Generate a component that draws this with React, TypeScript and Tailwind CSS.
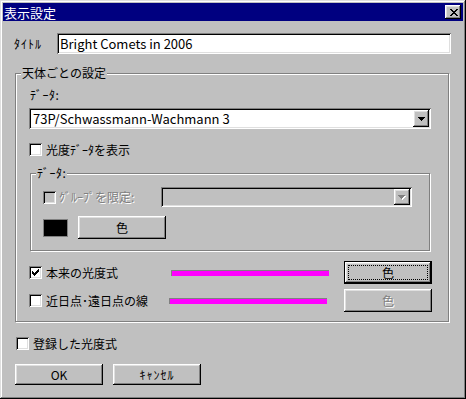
import React from 'react';

// pixel glyphs for the little win9x bitmaps
const CHECK = ['......#', '.....##', '#...###', '##.###.', '#####..', '.###...', '..#....'];
const CLOSE_X = ['##....##', '.##..##.', '..####..', '...##...', '..####..', '.##..##.', '##....##'];
const ARROW = ['#######', '.#####.', '..###..', '...#...'];

function Bitmap({ rows, color = '#000', shadow }: { rows: string[]; color?: string; shadow?: string }) {
  const w = rows[0].length + (shadow ? 1 : 0);
  const h = rows.length + (shadow ? 1 : 0);
  const cells: [number, number][] = [];
  rows.forEach((r, y) => r.split('').forEach((c, x) => c === '#' && cells.push([x, y])));
  return (
    <svg width={w} height={h} viewBox={`0 0 ${w} ${h}`} shapeRendering="crispEdges" className="block">
      {shadow && cells.map(([x, y]) => <rect key={`s${x}-${y}`} x={x + 1} y={y + 1} width={1} height={1} fill={shadow} />)}
      {cells.map(([x, y]) => <rect key={`${x}-${y}`} x={x} y={y} width={1} height={1} fill={color} />)}
    </svg>
  );
}

const raised = 'bg-[#c0c0c0] shadow-[inset_-1px_-1px_#000,inset_1px_1px_#fff,inset_-2px_-2px_#808080,inset_2px_2px_#dfdfdf]';
const sunken = 'shadow-[inset_1px_1px_#808080,inset_-1px_-1px_#fff,inset_2px_2px_#000,inset_-2px_-2px_#dfdfdf]';
const disabledText = 'text-[#808080] [text-shadow:1px_1px_0_#fff]';

function Checkbox({ checked, disabled }: { checked?: boolean; disabled?: boolean }) {
  return (
    <div className={`w-[13px] h-[13px] shrink-0 flex items-start justify-start pl-[3px] pt-[3px] ${disabled ? 'bg-[#c0c0c0]' : 'bg-white'} ${sunken}`}>
      {checked && <Bitmap rows={CHECK} />}
    </div>
  );
}

function Button({ label, width, height, isDefault, disabled, wide }: { label: string; width: number; height: number; isDefault?: boolean; disabled?: boolean; wide?: boolean }) {
  if (isDefault) {
    return (
      <div className="border border-black shrink-0" style={{ width, height }}>
        <div className={`w-full h-full p-[3px] ${raised}`}>
          <div className="w-full h-full border border-dotted border-black flex items-center justify-center">{label}</div>
        </div>
      </div>
    );
  }
  return (
    <div className={`shrink-0 flex items-center justify-center ${raised} ${disabled ? disabledText : ''} ${wide ? 'tracking-[1px]' : ''}`} style={{ width, height }}>
      {label}
    </div>
  );
}

function Combo({ value, width, height, disabled }: { value?: string; width: number; height: number; disabled?: boolean }) {
  return (
    <div className={`shrink-0 flex p-[2px] ${disabled ? 'bg-[#c0c0c0]' : 'bg-white'} ${sunken}`} style={{ width, height }}>
      <div className="flex-1 pl-[2px] flex items-center text-[13px] leading-[13px]">{value}</div>
      <div className={`w-[16px] h-full flex items-center justify-center ${raised}`}>
        {disabled ? <Bitmap rows={ARROW} color="#808080" shadow="#fff" /> : <Bitmap rows={ARROW} />}
      </div>
    </div>
  );
}

function Magenta({ width }: { width: number }) {
  return <div className="h-[6px] shrink-0 bg-[#ff00ff] border-t border-l border-[#808080]" style={{ width }} />;
}

export default function App() {
  return (
    <div className="w-[466px] h-[399px] bg-[#c0c0c0] p-[3px] flex flex-col text-black text-[12px] leading-[12px] font-['Noto_Sans_CJK_JP','Noto_Sans',sans-serif] shadow-[inset_-1px_-1px_#000,inset_1px_1px_#dfdfdf,inset_-2px_-2px_#808080,inset_2px_2px_#fff]">
      {/* title bar */}
      <div className="h-[18px] bg-[#000080] flex items-center justify-between pl-[1px] pr-[2px]">
        <span className="text-white text-[13px] leading-[13px]">表示設定</span>
        <div className={`w-[16px] h-[14px] flex items-center justify-center pl-[1px] ${raised}`}>
          <Bitmap rows={CLOSE_X} />
        </div>
      </div>

      {/* title field */}
      <div className="mt-[12px] flex items-center pl-[11px]">
        <span className="w-[43px] tracking-[1px]">ﾀｲﾄﾙ</span>
        <div className={`w-[394px] h-[21px] bg-white px-[3px] flex items-center text-[13px] leading-[13px] ${sunken}`}>Bright Comets in 2006</div>
      </div>

      {/* per-object settings */}
      <div className="relative mt-[19px] ml-[12px] w-[434px] h-[249px] border border-[#808080] shadow-[inset_1px_1px_#fff,1px_1px_#fff] flex flex-col pl-[13px]">
        <span className="absolute -top-[7px] left-[5px] bg-[#c0c0c0] px-[1px]">天体ごとの設定</span>

        <span className="mt-[15px] pl-[1px] tracking-[0.5px]">ﾃﾞｰﾀ:</span>
        <div className="mt-[7px]">
          <Combo value="73P/Schwassmann-Wachmann 3" width={402} height={21} />
        </div>

        <div className="mt-[14px] h-[13px] flex items-center gap-[4px]">
          <Checkbox />
          <span>光度ﾃﾞｰﾀを表示</span>
        </div>

        {/* data sub-group */}
        <div className="relative mt-[17px] ml-[1px] w-[400px] h-[78px] border border-[#808080] shadow-[inset_1px_1px_#fff,1px_1px_#fff] flex flex-col pl-[12px]">
          <span className="absolute -top-[7px] left-[5px] bg-[#c0c0c0] px-[1px] tracking-[0.5px]">ﾃﾞｰﾀ:</span>
          <div className="mt-[13px] h-[20px] flex items-center">
            <div className="w-[118px] flex items-center gap-[3px]">
              <Checkbox disabled />
              <span className={disabledText}>ｸﾞﾙｰﾌﾟを限定:</span>
            </div>
            <Combo width={251} height={20} disabled />
          </div>
          <div className="mt-[9px] h-[23px] flex items-center">
            <div className="w-[25px] h-[18px] bg-black border border-[#808080]" />
            <div className="ml-[10px]">
              <Button label="色" width={88} height={23} />
            </div>
          </div>
        </div>

        <div className="mt-[10px] h-[23px] flex items-center">
          <Checkbox checked />
          <span className="w-[129px] pl-[4px]">本来の光度式</span>
          <Magenta width={158} />
          <div className="ml-[15px]">
            <Button label="色" width={88} height={23} isDefault />
          </div>
        </div>
        <div className="mt-[5px] h-[23px] flex items-center">
          <Checkbox />
          <span className="w-[127px] pl-[4px]">近日点･遠日点の線</span>
          <Magenta width={158} />
          <div className="ml-[17px]">
            <Button label="色" width={88} height={23} disabled />
          </div>
        </div>
      </div>

      <div className="mt-[15px] ml-[13px] h-[13px] flex items-center gap-[4px]">
        <Checkbox />
        <span>登録した光度式</span>
      </div>

      <div className="mt-[14px] ml-[12px] flex gap-[10px]">
        <Button label="OK" width={88} height={21} />
        <Button label="ｷｬﾝｾﾙ" width={88} height={21} wide />
      </div>
    </div>
  );
}
